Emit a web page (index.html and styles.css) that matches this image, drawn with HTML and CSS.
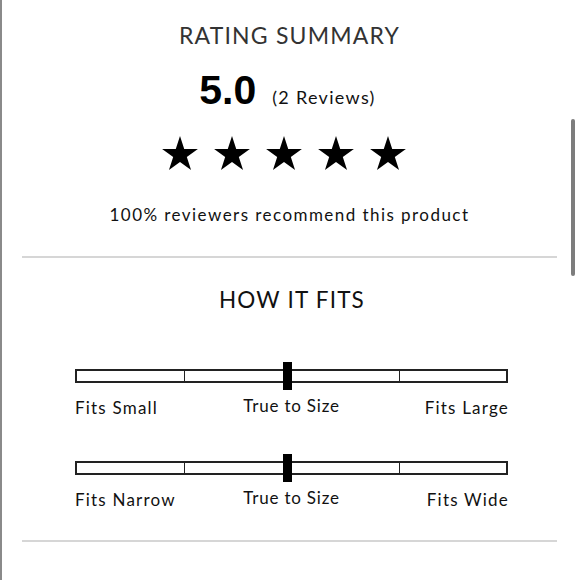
FILE: index.html
```html
<!DOCTYPE html>
<html>
<head>
<meta charset="utf-8">
<link rel="stylesheet" href="styles.css">
</head>
<body>
<div class="page">
  <section class="summary">
    <h2 class="title">RATING SUMMARY</h2>
    <div class="score-row">
      <span class="score">5.0</span>
      <span class="count">(2 Reviews)</span>
    </div>
    <div class="stars">
      <svg class="star" viewBox="0 0 36 34"><polygon points="18,0 22.22,12.99 35.88,12.99 24.83,21.02 29.05,34 18,25.98 6.95,34 11.17,21.02 0.12,12.99 13.78,12.99"/></svg>
      <svg class="star" viewBox="0 0 36 34"><polygon points="18,0 22.22,12.99 35.88,12.99 24.83,21.02 29.05,34 18,25.98 6.95,34 11.17,21.02 0.12,12.99 13.78,12.99"/></svg>
      <svg class="star" viewBox="0 0 36 34"><polygon points="18,0 22.22,12.99 35.88,12.99 24.83,21.02 29.05,34 18,25.98 6.95,34 11.17,21.02 0.12,12.99 13.78,12.99"/></svg>
      <svg class="star" viewBox="0 0 36 34"><polygon points="18,0 22.22,12.99 35.88,12.99 24.83,21.02 29.05,34 18,25.98 6.95,34 11.17,21.02 0.12,12.99 13.78,12.99"/></svg>
      <svg class="star" viewBox="0 0 36 34"><polygon points="18,0 22.22,12.99 35.88,12.99 24.83,21.02 29.05,34 18,25.98 6.95,34 11.17,21.02 0.12,12.99 13.78,12.99"/></svg>
    </div>
    <p class="recommend">100% reviewers recommend this product</p>
  </section>
  <hr class="divider">
  <section class="fits">
    <h2 class="title dark">HOW IT FITS</h2>
    <div class="scale">
      <div class="bar">
        <span class="seg"></span><span class="seg"></span><span class="seg"></span><span class="seg"></span>
        <span class="marker"></span>
      </div>
      <div class="labels">
        <span class="lo">Fits Small</span><span class="mid">True to Size</span><span class="hi">Fits Large</span>
      </div>
    </div>
    <div class="scale">
      <div class="bar">
        <span class="seg"></span><span class="seg"></span><span class="seg"></span><span class="seg"></span>
        <span class="marker"></span>
      </div>
      <div class="labels">
        <span class="lo">Fits Narrow</span><span class="mid">True to Size</span><span class="hi">Fits Wide</span>
      </div>
    </div>
  </section>
  <hr class="divider">
  <div class="scrollthumb"></div>
</div>
</body>
</html>
```

FILE: styles.css
```css
html, body {
  margin: 0;
  padding: 0;
  background: #fff;
}
body {
  font-family: Lato, "Noto Sans", sans-serif;
  color: #111;
}
.page {
  position: relative;
  height: 580px;
  box-sizing: border-box;
  border-left: 2px solid #8a8a8a;
  padding: 0 23px 0 20px;
  overflow: hidden;
}
.summary {
  display: flex;
  flex-direction: column;
  align-items: center;
  padding-top: 21px;
}
.title {
  margin: 0;
  font-weight: 400;
  font-size: 23px;
  line-height: 28px;
  letter-spacing: 1.2px;
  color: #333;
}
.title.dark {
  color: #111;
  font-size: 22.5px;
}
.score-row {
  display: flex;
  align-items: baseline;
  gap: 16px;
  margin-top: 19px;
  margin-right: 4px;
}
.score {
  font-family: "Liberation Sans", Arial, sans-serif;
  font-weight: 700;
  font-size: 41px;
  line-height: 44px;
  color: #000;
}
.count {
  font-size: 18px;
  letter-spacing: 1.3px;
  color: #111;
}
.stars {
  display: flex;
  gap: 16px;
  margin-top: 24px;
  margin-right: 11px;
}
.star {
  width: 36px;
  height: 34px;
  display: block;
  fill: #000;
}
.recommend {
  margin: 35px 0 0 0;
  font-size: 17px;
  line-height: 20px;
  letter-spacing: 1.45px;
  color: #111;
}
.divider {
  margin: 0;
  border: 0;
  border-top: 2px solid #d6d6d6;
}
.summary + .divider {
  margin-top: 31px;
}
.fits {
  display: flex;
  flex-direction: column;
  padding: 28px 49px 29px 53px;
}
.fits .title {
  align-self: center;
  padding-left: 1px;
}
.scale {
  margin-top: 55px;
}
.scale + .scale {
  margin-top: 42px;
}
.bar {
  position: relative;
  display: flex;
  height: 14px;
  border: 2px solid #222;
  box-sizing: border-box;
}
.seg {
  flex: 1;
  border-left: 1.5px solid #222;
}
.seg:first-child {
  border-left: 0;
}
.marker {
  position: absolute;
  left: 206px;
  top: -9px;
  width: 9px;
  height: 28px;
  background: #000;
}
.labels {
  display: grid;
  grid-template-columns: 1fr auto 1fr;
  margin-top: 14px;
  font-size: 17px;
  line-height: 22px;
  letter-spacing: 1.2px;
  color: #111;
}
.labels .lo {
  justify-self: start;
}
.labels .mid {
  margin-top: -2px;
  letter-spacing: 0.8px;
}
.labels .hi {
  justify-self: end;
  margin-right: -1px;
}
.scrollthumb {
  position: absolute;
  right: 5px;
  top: 119px;
  width: 4px;
  height: 157px;
  border-radius: 2px;
  background: #7d7d7d;
}
```
